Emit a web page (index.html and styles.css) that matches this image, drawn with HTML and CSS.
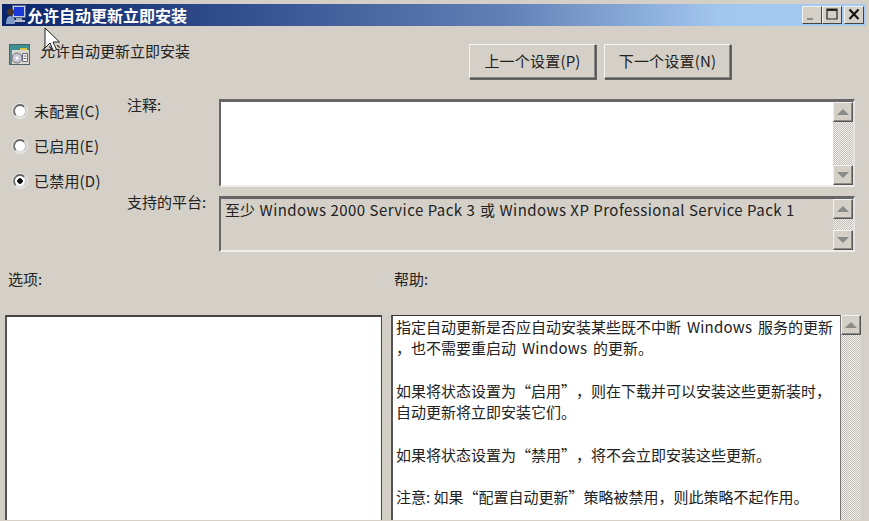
FILE: index.html
```html
<!DOCTYPE html>
<html lang="zh-CN">
<head>
<meta charset="utf-8">
<title>允许自动更新立即安装</title>
<link rel="stylesheet" href="styles.css">
</head>
<body>
<div class="window">
  <div class="titlebar">
    <svg class="title-icon" width="22" height="22" viewBox="0 0 22 22">
      <rect x="7.500" y="1.500" width="13" height="12" fill="#c4cfdc" stroke="#5a6a88"/>
      <rect x="9" y="3" width="10" height="9" fill="#1a3ad8"/>
      <rect x="11" y="14" width="6" height="3" fill="#9aa4b8"/>
      <rect x="9" y="16" width="11" height="2" fill="#b8c0cc"/>
      <circle cx="5.500" cy="8" r="3.500" fill="#4a3428"/>
      <path d="M1 20c0-5 1.500-8 4.500-8s4.500 3 4.500 8z" fill="#7f9cc8"/>
    </svg>
    <span class="title-text">允许自动更新立即安装</span>
    <div class="caption-buttons">
      <span class="cap-btn"><svg width="18" height="15" viewBox="0 0 18 15"><rect x="4" y="11" width="6" height="2" fill="#8a8a8a"/></svg></span>
      <span class="cap-btn"><svg width="18" height="15" viewBox="0 0 18 15"><path d="M4 2h10v10H4z" fill="none" stroke="#222" stroke-width="1.2"/><rect x="4" y="2" width="10" height="2" fill="#222"/></svg></span>
      <span class="cap-btn cap-close"><svg width="18" height="15" viewBox="0 0 18 15"><path d="M4.500 2.500l9 9.500M13.500 2.500l-9 9.500" stroke="#111" stroke-width="2" fill="none"/></svg></span>
    </div>
  </div>

  <div class="header">
    <div class="setting-name">
      <svg width="21" height="21" viewBox="0 0 21 21">
        <rect x="0.500" y="0.500" width="20" height="20" fill="#d8d8d0" stroke="#4f6468"/>
        <rect x="1" y="1" width="19" height="5" fill="#3f8f96"/>
        <rect x="11" y="4" width="7" height="2" fill="#e0c040"/>
        <rect x="1" y="6" width="2" height="14" fill="#5d8c90"/>
        <circle cx="8" cy="14" r="5" fill="#c8c8d4" stroke="#777"/>
        <circle cx="8" cy="14" r="1.500" fill="#fff"/>
        <path d="M13.500 9.500h5v8h-5zM14.500 12h3M14.500 14.500h3" fill="#f4f4f0" stroke="#667"/>
      </svg>
      <span class="setting-text">允许自动更新立即安装</span>
    </div>
    <div class="nav-buttons">
      <button class="btn" type="button">上一个设置(P)</button>
      <button class="btn" type="button">下一个设置(N)</button>
    </div>
  </div>

  <div class="config">
    <div class="radios">
      <div class="radio-row"><span class="radio"></span><span>未配置(C)</span></div>
      <div class="radio-row"><span class="radio"></span><span>已启用(E)</span></div>
      <div class="radio-row"><span class="radio radio-on"></span><span>已禁用(D)</span></div>
    </div>
    <div class="fields">
      <div class="field-label label-note">注释:</div>
      <div class="box box-note">
        <div class="box-body"></div>
        <div class="scrollbar">
          <span class="arrow"><i class="tri tri-up"></i></span>
          <span class="track"></span>
          <span class="arrow"><i class="tri tri-down"></i></span>
        </div>
      </div>
      <div class="field-label label-platform">支持的平台:</div>
      <div class="box box-platform">
        <div class="box-body platform-text">至少 <span class="latin">Windows 2000 Service Pack 3</span> 或 <span class="latin">Windows XP Professional Service Pack 1</span></div>
        <div class="scrollbar">
          <span class="arrow"><i class="tri tri-up"></i></span>
          <span class="track"></span>
          <span class="arrow"><i class="tri tri-down"></i></span>
        </div>
      </div>
    </div>
  </div>

  <div class="pane-labels">
    <div class="pane-label-options">选项:</div>
    <div>帮助:</div>
  </div>

  <div class="panes">
    <div class="pane pane-options"></div>
    <div class="pane pane-help">
      <p>指定自动更新是否应自动安装某些既不中断 <span class="latin">Windows</span> 服务的更新<br>，也不需要重启动 <span class="latin">Windows</span> 的更新。</p>
      <p>如果将状态设置为“启用”，则在下载并可以安装这些更新装时，<br>自动更新将立即安装它们。</p>
      <p>如果将状态设置为“禁用”，将不会立即安装这些更新。</p>
      <p>注意: 如果“配置自动更新”策略被禁用，则此策略不起作用。</p>
    </div>
    <div class="scrollbar help-scroll">
      <span class="arrow"><i class="tri tri-up"></i></span>
      <span class="track"></span>
    </div>
  </div>

  <svg class="cursor" width="16" height="26" viewBox="0 0 16 26">
    <path d="M1 1v20l5-5 3.500 8 3-1.500-3.500-7.500h6.500z" fill="#fff" stroke="#222" stroke-width="1"/>
  </svg>
</div>
</body>
</html>
```
FILE: styles.css
```css
* { box-sizing: border-box; }
html, body { margin: 0; padding: 0; }
body {
  width: 869px;
  height: 521px;
  overflow: hidden;
  background: #d4d0c8;
  font-family: "Noto Sans CJK SC", "Noto Sans", sans-serif;
  font-size: 15px;
  color: #222;
  text-spacing-trim: space-all;
}
.window {
  position: relative;
  width: 869px;
  height: 521px;
  padding-top: 4px;
  overflow: hidden;
  background: #d4d0c8;
}
.titlebar {
  display: flex;
  align-items: center;
  height: 22px;
  margin: 0 3px 0 2px;
  padding: 0 2px 0 3px;
  background: linear-gradient(90deg, #0a246a 0%, #6080b5 58%, #a3c6ee 83%, #a6caf0 100%);
}
.title-icon { flex: none; }
.title-text {
  font-size: 16px;
  font-weight: 700;
  line-height: 22px;
  color: #fff;
}
.caption-buttons { display: flex; margin-left: auto; }
.cap-btn {
  display: block;
  width: 20px;
  height: 18px;
  background: #d4d0c8;
  border: 1px solid;
  border-color: #f4f2ee #444 #444 #f4f2ee;
}
.cap-btn svg { display: block; }
.cap-close { margin-left: 2px; }

.header {
  display: flex;
  height: 53px;
  padding: 18px 138px 0 9px;
}
.setting-name { display: flex; align-items: flex-start; }
.setting-text { margin-left: 10px; line-height: 14px; color: #222; }
.nav-buttons { display: flex; gap: 8px; margin-left: auto; }
.btn {
  width: 127px;
  height: 35px;
  padding: 0 0 2px;
  background: #d4d0c8;
  border: 1px solid;
  border-color: #f6f4f0 #555 #555 #f6f4f0;
  box-shadow: inset -1px -1px 0 #8a8882, 1px 1px 0 #666;
  font: inherit;
  letter-spacing: 0.2px;
  color: #222;
}

.config {
  display: flex;
  margin-top: 20px;
  padding-left: 13px;
}
.radios {
  width: 114px;
  padding-top: 2px;
  display: flex;
  flex-direction: column;
  gap: 15px;
}
.radio-row {
  display: flex;
  align-items: center;
  gap: 7px;
  height: 20px;
  line-height: 18px;
  letter-spacing: 0.2px;
  color: #222;
}
.radio {
  flex: none;
  width: 14px;
  height: 14px;
  border-radius: 50%;
  background: #fff;
  border: 2px solid;
  border-color: #666 #ccc #ddd #777;
  box-shadow: 0 0 0 1px rgba(255, 255, 255, 0.5);
}
.radio-on { background: radial-gradient(circle, #111 0 2.500px, #fff 3px); }

.fields {
  display: grid;
  grid-template-columns: 92px 636px;
  grid-template-rows: 88px 56px;
  row-gap: 9px;
}
.field-label { line-height: 12px; color: #222; }
.box {
  display: flex;
  border: 2px solid;
  border-top-width: 3px;
  border-color: #666 #e6e4de #efede8 #666;
}
.box-note { background: #fff; }
.box-platform { background: #d4d0c8; }
.box-body { flex: 1; min-width: 0; }
.platform-text { padding: 1px 0 0 4px; line-height: 19px; color: #222; white-space: nowrap; word-spacing: 0.2px; }
.platform-text .latin { letter-spacing: 0.44px; margin: 0 1px; }

.scrollbar {
  flex: none;
  display: flex;
  flex-direction: column;
  width: 20px;
  background-color: #d4d0c8;
}
.arrow {
  flex: none;
  display: flex;
  align-items: center;
  justify-content: center;
  height: 20px;
  background: #d4d0c8;
  border: 1px solid;
  border-color: #f4f2ee #555 #555 #f4f2ee;
  box-shadow: inset -1px -1px 0 #8e8c86;
}
.track {
  flex: 1;
  background-image: conic-gradient(#f0efeb 25%, #c4c1ba 0 50%, #f0efeb 0 75%, #c4c1ba 0);
  background-size: 2px 2px;
}
.tri {
  display: block;
  width: 0;
  height: 0;
  border-left: 6px solid transparent;
  border-right: 6px solid transparent;
}
.tri-up { border-bottom: 6px solid #8a8a86; }
.tri-down { border-top: 6px solid #8a8a86; }

.pane-labels {
  display: flex;
  margin-top: 17px;
  height: 46px;
  padding-left: 8px;
  line-height: 20px;
  color: #222;
}
.pane-label-options { width: 386px; }

.panes {
  display: flex;
  height: 205px;
  padding-left: 5px;
}
.pane {
  flex: none;
  background: #fff;
  border: 2px solid;
}
.pane-options {
  width: 377px;
  margin-right: 9px;
  border-width: 2px 1px 0 2px;
  border-color: #444 #444 #d4d0c8 #555;
}
.pane-help {
  width: 450px;
  border-width: 1px 1px 0 2px;
  border-color: #333 #777 #d4d0c8 #555;
  padding: 0 0 0 3px;
  line-height: 21.300px;
  color: #222;
}
.pane-help p { margin: 0 0 21.300px; white-space: nowrap; }
.pane-help .latin { letter-spacing: 0.2px; margin: 0 2.500px; }

.cursor {
  position: absolute;
  left: 44px;
  top: 27px;
}
```
